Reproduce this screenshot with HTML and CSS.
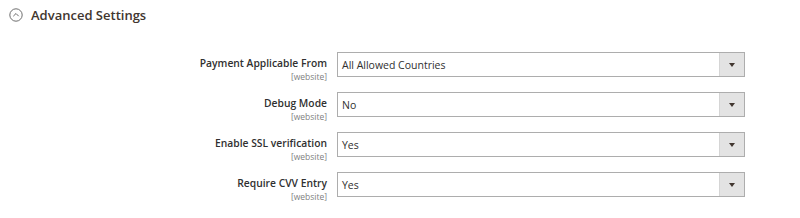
FILE: index.html
```html
<!DOCTYPE html>
<html lang="en">
<head>
    <meta charset="UTF-8">
    <title>Advanced Settings</title>
    <link rel="stylesheet" href="styles.css">
</head>
<body>
    <!-- Section header -->
    <div class="section-head">
        <span class="toggle">
            <svg width="14" height="14" viewBox="0 0 14 14">
                <circle cx="7" cy="7" r="6.2" fill="none" stroke="#6d6d6d" stroke-width="1"/>
                <polyline points="4.3,8.2 7,5.5 9.7,8.2" fill="none" stroke="#6d6d6d" stroke-width="1"/>
            </svg>
        </span>
        <span class="section-title">Advanced Settings</span>
    </div>

    <div class="fields">
        <div class="row">
            <div class="label">
                <span class="label-text">Payment Applicable From</span>
                <span class="scope">[website]</span>
            </div>
            <div class="select">
                <span class="value">All Allowed Countries</span>
                <span class="arrow"></span>
            </div>
        </div>
        <div class="row">
            <div class="label">
                <span class="label-text">Debug Mode</span>
                <span class="scope">[website]</span>
            </div>
            <div class="select">
                <span class="value">No</span>
                <span class="arrow"></span>
            </div>
        </div>
        <div class="row">
            <div class="label">
                <span class="label-text">Enable SSL verification</span>
                <span class="scope">[website]</span>
            </div>
            <div class="select">
                <span class="value">Yes</span>
                <span class="arrow"></span>
            </div>
        </div>
        <div class="row">
            <div class="label">
                <span class="label-text">Require CVV Entry</span>
                <span class="scope">[website]</span>
            </div>
            <div class="select">
                <span class="value">Yes</span>
                <span class="arrow"></span>
            </div>
        </div>
    </div>
</body>
</html>
```

FILE: styles.css
```css
body {
    margin: 0;
    padding: 0;
    background-color: #fff;
    font-family: "Open Sans", Arial, sans-serif;
    color: #303030;
}
.section-head {
    display: flex;
    align-items: center;
    height: 29px;
    padding-left: 9px;
}
.toggle {
    display: flex;
    width: 14px;
    height: 14px;
    margin-right: 8px;
}
.section-title {
    font-size: 13px;
    font-weight: 600;
    color: #41362f;
}
.fields {
    display: flex;
    flex-direction: column;
    gap: 9px;
    padding-top: 23px;
}
.row {
    display: grid;
    grid-template-columns: 327px 408px;
    column-gap: 10px;
}
.label {
    display: flex;
    flex-direction: column;
    align-items: flex-end;
    padding-top: 4px;
}
.label-text {
    font-size: 10.3px;
    font-weight: 600;
    line-height: 14px;
    color: #303030;
}
.scope {
    font-size: 8.5px;
    line-height: 12px;
    margin-top: 1px;
    color: #808080;
}
.select {
    display: flex;
    align-items: center;
    height: 25px;
    box-sizing: border-box;
    border: 1px solid #adadad;
    background-color: #fff;
}
.value {
    flex: 1;
    padding-left: 4px;
    font-size: 10.5px;
    color: #303030;
}
.arrow {
    display: flex;
    align-items: center;
    justify-content: center;
    width: 24px;
    height: 100%;
    background-color: #e3e3e3;
    border-left: 1px solid #d5d5d5;
}
.arrow::after {
    content: "";
    border-left: 3px solid transparent;
    border-right: 3px solid transparent;
    border-top: 4px solid #41362f;
}
```
